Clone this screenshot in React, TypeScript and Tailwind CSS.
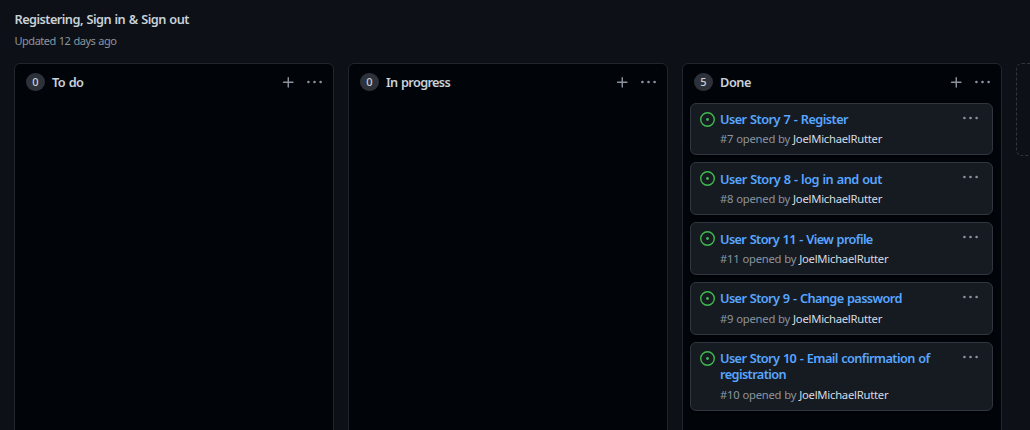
import React from "react";

type Story = { id: number; title: string; titleClass: string; cardClass: string };

const stories: Story[] = [
  { id: 7, title: "User Story 7 - Register", titleClass: "tracking-[-0.56px]", cardClass: "pb-[7.65px]" },
  { id: 8, title: "User Story 8 - log in and out", titleClass: "tracking-[-0.54px]", cardClass: "pb-[7.65px]" },
  { id: 11, title: "User Story 11 - View profile", titleClass: "tracking-[-0.64px]", cardClass: "pb-[7.65px]" },
  { id: 9, title: "User Story 9 - Change password", titleClass: "tracking-[-0.62px]", cardClass: "pb-[7.65px]" },
  {
    id: 10,
    title: "User Story 10 - Email confirmation of registration",
    titleClass: "tracking-[-0.61px]",
    cardClass: "pb-[8.25px]",
  },
];

function PlusIcon() {
  return (
    <svg viewBox="0 0 16 16" className="size-[15px] fill-[#8b949e]">
      <path d="M7.75 2a.75.75 0 0 1 .75.75V7h4.25a.75.75 0 0 1 0 1.5H8.5v4.25a.75.75 0 0 1-1.5 0V8.5H2.75a.75.75 0 0 1 0-1.5H7V2.75A.75.75 0 0 1 7.75 2Z" />
    </svg>
  );
}

function KebabIcon() {
  return (
    <svg viewBox="0 0 16 16" className="size-[15px] fill-[#8b949e]">
      <circle cx="1.5" cy="7.5" r="1.4" />
      <circle cx="8" cy="7.5" r="1.4" />
      <circle cx="14.5" cy="7.5" r="1.4" />
    </svg>
  );
}

function IssueIcon() {
  return (
    <svg viewBox="0 0 16 16" className="size-[15px] shrink-0 fill-[#3fb950]">
      <path d="M8 9.5a1.5 1.5 0 1 0 0-3 1.5 1.5 0 0 0 0 3Z" />
      <path d="M8 0a8 8 0 1 1 0 16A8 8 0 0 1 8 0ZM1.5 8a6.5 6.5 0 1 0 13 0 6.5 6.5 0 0 0-13 0Z" />
    </svg>
  );
}

type ColumnProps = { name: string; count: number; nameClass: string; children?: React.ReactNode };

function Column({ name, count, nameClass, children }: ColumnProps) {
  return (
    <section className="h-[400px] w-80 shrink-0 rounded-md border border-[#21262d] bg-[#010409]">
      <header className="flex h-9 items-center pr-[11px] pl-[11px]">
        <span className="flex h-[18px] w-[19px] items-center justify-center rounded-full bg-[#2d3139] text-[11px] font-medium text-[#c9d1d9]">
          {count}
        </span>
        <h3 className={`mt-px ml-[7px] flex-1 text-[12.75px] font-semibold [word-spacing:0.8px] ${nameClass}`}>
          {name}
        </h3>
        <PlusIcon />
        <span className="ml-[11px]">
          <KebabIcon />
        </span>
      </header>
      {children}
    </section>
  );
}

function Card({ story }: { story: Story }) {
  return (
    <article
      className={`flex rounded-md border border-[#30363d] bg-[#161b22] pt-[8px] pr-[14px] pl-[9px] shadow-sm ${story.cardClass}`}
    >
      <IssueIcon />
      <div className="-mt-[0.7px] ml-[5px] min-w-0 flex-1">
        <h4
          className={`text-[12.75px] leading-4 font-semibold text-[#58a6ff] [word-spacing:0.8px] ${story.titleClass}`}
        >
          {story.title}
        </h4>
        <p className="mt-[4.35px] -mb-[0.65px] text-[11.25px] leading-4 tracking-[-0.24px] text-[#8b949e] [word-spacing:0.3px]">
          #{story.id} opened by <span className="text-[#d5dce3]">JoelMichaelRutter</span>
        </p>
      </div>
      <span className="-mt-px ml-[22px]">
        <KebabIcon />
      </span>
    </article>
  );
}

export default function App() {
  return (
    <main className="h-[430px] w-full overflow-hidden bg-[#0d1117] pl-[14px] font-['Noto_Sans',sans-serif] text-[#c9d1d9]">
      <div className="h-[63px] pt-[10px] pl-[0.5px]">
        <h2 className="text-[12.75px] leading-[18px] font-semibold tracking-[-0.55px] [word-spacing:0.8px]">
          Registering, Sign in &amp; Sign out
        </h2>
        <p className="mt-[5px] text-[11px] leading-4 tracking-[-0.48px] text-[#8b949e] [word-spacing:0.6px]">
          Updated 12 days ago
        </p>
      </div>
      <div className="flex gap-[14px]">
        <Column name="To do" count={0} nameClass="tracking-[-0.57px]" />
        <Column name="In progress" count={0} nameClass="tracking-[-0.66px]" />
        <Column name="Done" count={5} nameClass="tracking-[-0.45px]">
          <div className="mt-[2.55px] flex flex-col gap-[7.2px] pr-[8px] pl-[7px]">
            {stories.map((s) => (
              <Card key={s.id} story={s} />
            ))}
          </div>
        </Column>
        <div className="h-[93px] w-80 shrink-0 rounded-md border border-dashed border-[#30363d]" />
      </div>
    </main>
  );
}
